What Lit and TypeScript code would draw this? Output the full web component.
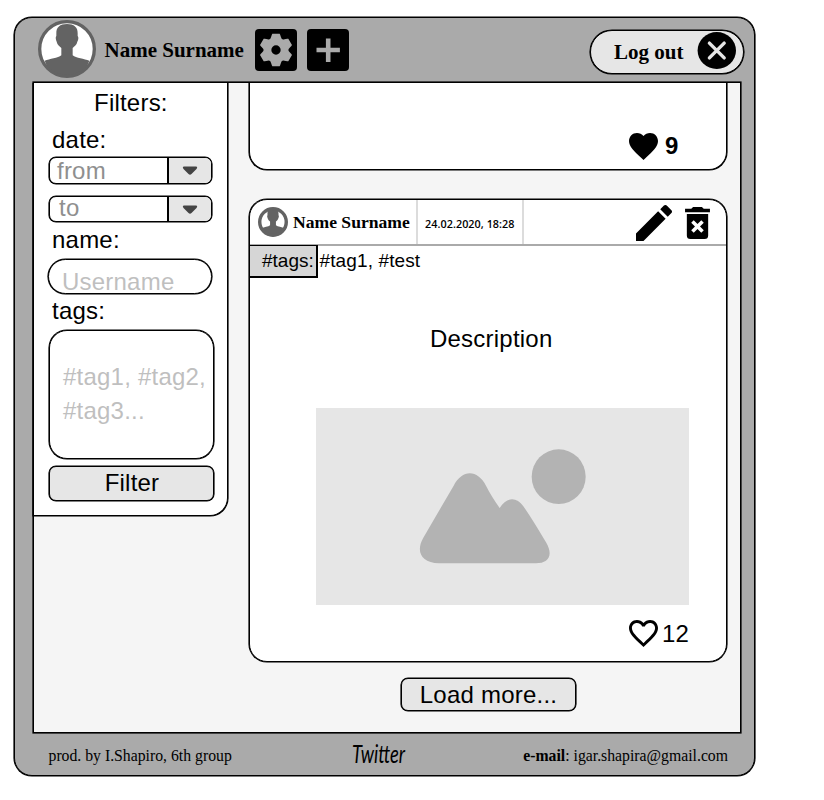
import { LitElement, html, css, svg } from "lit";
import { customElement } from "lit/decorators.js";

const gearTooth = (deg: number, pts: [number, number][]) => {
  const a = (deg * Math.PI) / 180;
  return pts.map(([x, y]) =>
    `${(x * Math.cos(a) - y * Math.sin(a)).toFixed(2)} ${(x * Math.sin(a) + y * Math.cos(a)).toFixed(2)}`);
};

const gearPath = (() => {
  let d = "";
  for (let i = 0; i < 6; i++) {
    const [a, b, c, e, f, g] = gearTooth(i * 60, [[-15, -38], [-12.5, -46], [-11, -49], [11, -49], [12.5, -46], [15, -38]]);
    const [valley] = gearTooth(i * 60 + 30, [[0, -34]]);
    d += `${i ? "L" : "M"}${a}L${b}L${c}L${e}L${f}L${g}Q${valley} ${gearTooth(i * 60 + 60, [[-15, -38]])[0]}`;
  }
  return d + "ZM14 0A14 14 0 1 0 -14 0A14 14 0 1 0 14 0Z";
})();

const avatar = (ring: number) => html`<svg class="avatar" viewBox="0 0 174 174">
  <circle cx="87" cy="87" r="80" fill="#fff"></circle>
  <path fill="#636363" d="M87 12C66 12 54 22 55 40L55 48C52 50 53 59 56 65C58 75 65 79 70 84V106C60 114 35 117 20 122C30 155 58 171 87 171C116 171 144 155 154 122C139 117 114 114 104 106V84C109 79 116 75 118 65C122 59 122 50 119 48L119 40C120 22 108 12 87 12Z"></path>
  <circle cx="87" cy="87" r=${87 - ring / 2} fill="none" stroke="#636363" stroke-width=${ring}></circle>
</svg>`;

const heartSolid = svg`<path d="M12 21.35L10.55 20.03C5.4 15.36 2 12.27 2 8.5C2 5.41 4.42 3 7.5 3C9.24 3 10.91 3.81 12 5.08C13.09 3.81 14.76 3 16.5 3C19.58 3 22 5.41 22 8.5C22 12.27 18.6 15.36 13.45 20.03L12 21.35Z"></path>`;
const heartOutline = svg`<path d="M12.1 18.55L12 18.65L11.89 18.55C7.14 14.24 4 11.39 4 8.5C4 6.5 5.5 5 7.5 5C9.04 5 10.54 6 11.07 7.36H12.93C13.46 6 14.96 5 16.5 5C18.5 5 20 6.5 20 8.5C20 11.39 16.86 14.24 12.1 18.55M16.5 3C14.76 3 13.09 3.81 12 5.08C10.91 3.81 9.24 3 7.5 3C4.42 3 2 5.41 2 8.5C2 12.27 5.4 15.36 10.55 20.03L12 21.35L13.45 20.03C18.6 15.36 22 12.27 22 8.5C22 5.41 19.58 3 16.5 3Z"></path>`;

@customElement("app-root")
export class AppRoot extends LitElement {
  static styles = css`
    :host {
      display: block;
      width: 824px;
      height: 800px;
      box-sizing: border-box;
      padding: 17px 0 0 14px;
      background: #fff;
      color: #000;
      font: 24px/28px "Liberation Sans", Arial, sans-serif;
      letter-spacing: 0.22px;
    }
    * { box-sizing: border-box; }
    svg { display: block; flex: none; }
    button { font: inherit; letter-spacing: inherit; color: inherit; padding: 0; display: block; }
    .line { border: 1px solid #000; box-shadow: 0 0 0 0.6px #000; }
    .frame { width: 741px; height: 759px; border-radius: 18px; background: #aaa; }
    .serif { font-family: "Liberation Serif", "Times New Roman", serif; font-weight: bold; letter-spacing: 0; }

    .bar { height: 64px; display: flex; align-items: flex-start; padding: 2px 10px 0 23px; }
    .bar .avatar { width: 58px; height: 58px; }
    .bar .who { font-size: 21px; margin: 16px 11px 0 8.5px; width: 139px; white-space: nowrap; }
    .tile { width: 42px; height: 42px; border-radius: 4px; background: #000; border: 0; margin: 9px 10.5px 0 0; flex: none; }
    .logout { width: 154px; height: 44px; margin: 10px 0 0 auto; border-radius: 22px; background: #e6e6e6;
      display: flex; font-size: 21px; padding: 0 7px 0 23px; justify-content: space-between; align-items: flex-start; }
    .logout span { margin-top: 7px; }
    .logout svg { margin-top: 1px; }

    .screen { width: 708px; height: 651px; margin-left: 18px; background: #f5f5f5; display: flex; align-items: flex-start; }
    .filters { width: 195px; height: 433px; margin-left: -1px; background: #fff; border-top: 0; border-radius: 0 0 18px 0;
      padding: 6px 13px 0 15px; display: flex; flex-direction: column; clip-path: inset(0 -2px -2px -1px); }
    .filters h2 { font: inherit; margin: 0 0 9px; padding-left: 45px; }
    .filters label { padding-left: 3px; }
    .select { width: 163px; height: 27px; border-radius: 7px; display: flex; color: #8f8f8f; background: #fff; }
    .from-date { margin-top: 3px; }
    .to-date { margin: 12px 0 4px; height: 26px; }
    .select span { flex: 1; padding-left: 7px; line-height: 26px; }
    .to-date span { padding-left: 9px; line-height: 22px; }
    .arrow { width: 44px; border-left: 2px solid #000; border-radius: 0 6px 6px 0; background: #e6e6e6; padding: 8px 0 0 12.5px; }
    .field { color: #bfbfbf; background: #fff; }
    .user { width: 164px; height: 35px; margin: 5px 0 3px -1px; border-radius: 18px; padding: 8px 0 0 13px; }
    .tags { width: 165px; height: 129px; margin-top: 5px; border-radius: 18px; padding: 29px 0 0 13px; line-height: 34px; white-space: nowrap; }
    .action { background: #e6e6e6; border-radius: 7px; }
    .apply { width: 165px; height: 35px; margin-top: 7px; line-height: 31px; padding: 0 0 2px 1px; }

    .feed { width: 478px; margin-left: 21px; display: flex; flex-direction: column; }
    .post { background: #fff; }
    .previous { height: 87px; border-top: 0; border-radius: 0 0 18px 18px; padding: 49px 0 0 379px; clip-path: inset(0 -2px -2px -2px); }
    .likes { display: flex; height: 30px; align-items: flex-start; }
    .likes svg { width: 29px; height: 27px; margin-top: 1px; }
    .previous .likes { font-weight: bold; gap: 7px; }
    .current { height: 463px; margin-top: 29px; border-radius: 18px; }
    .meta { height: 46px; border-bottom: 2px solid #aaa; display: flex; align-items: flex-start; }
    .meta .avatar { width: 30px; height: 30px; margin: 7px 5px 0 8px; }
    .meta .who { font-size: 17.6px; width: 123px; margin-top: 8px; white-space: nowrap; }
    .meta time { width: 108px; height: 44px; border: solid #dcdcdc; border-width: 0 2px; padding-left: 7px;
      font: 600 10.8px/47px "Open Sans", sans-serif; letter-spacing: 0.05px; white-space: nowrap; }
    .pencil { margin: 5px 13px 0 auto; }
    .trash { margin: 7px 16px 0 0; }
    .tagrow { display: flex; font-size: 19px; height: 33px; margin-top: -1px; line-height: 31px; white-space: nowrap; letter-spacing: 0.12px; }
    .tagrow b { font-weight: normal; letter-spacing: 0; width: 68px; height: 33px; line-height: 29px; background: #d6d6d6; border: solid #000;
      border-width: 1px 2px 2px 0; padding-left: 12px; }
    .tagrow span { padding-left: 1.5px; }
    .text { margin: 47px 0 0; padding-left: 180px; }
    .picture { width: 373px; height: 197px; margin: 55px 0 0 66px; background: #e6e6e6; }
    .current .likes { margin: 14px 0 0 379px; gap: 4px; line-height: 29px; }
    .more { width: 175px; height: 33px; margin: 16px 0 0 152px; line-height: 31px; }

    .foot { height: 42px; display: flex; align-items: flex-start; padding: 9px 26px 0 33.5px; font: 15.75px/28px "Liberation Serif", serif; letter-spacing: 0; white-space: nowrap; }
    .foot .by { width: 303px; }
    .foot .brand { font: italic 24.5px/23px Lato, sans-serif; width: 160px; transform: scaleX(0.75); transform-origin: 0 0; margin-right: auto; }
  `;

  render() {
    const caret = html`<svg width="16" height="10" viewBox="0 0 16 10"><path fill="#444" d="M2 .5H14Q16 .8 14.5 3L9.5 8Q8 9.5 6.5 8L1.5 3Q0 .8 2 .5Z"></path></svg>`;
    return html`
      <div class="frame line">
        <header class="bar">
          ${avatar(10)}
          <span class="who serif">Name Surname</span>
          <button class="tile" aria-label="Settings">
            <svg width="42" height="42" viewBox="-63 -63 126 126"><path fill="#aaa" fill-rule="evenodd" d=${gearPath}></path></svg>
          </button>
          <button class="tile" aria-label="Add">
            <svg width="42" height="42"><path fill="#aaa" d="M18.9 9.5H23.5V18.7H32.9V23.3H23.5V33H18.9V23.3H9.5V18.7H18.9Z"></path></svg>
          </button>
          <button class="logout line serif"><span>Log out</span>
            <svg width="39" height="39" viewBox="0 0 39 39"><ellipse cx="19.8" cy="18.5" rx="19.2" ry="18.5"></ellipse><path stroke="#e6e6e6" stroke-width="3.4" stroke-linecap="round" d="M12.4 11.1L27.2 25.9M27.2 11.1L12.4 25.9"></path></svg>
          </button>
        </header>
        <main class="screen line">
          <aside class="filters line">
            <h2>Filters:</h2>
            <label>date:</label>
            <div class="select from-date line"><span>from</span><div class="arrow">${caret}</div></div>
            <div class="select to-date line"><span>to</span><div class="arrow">${caret}</div></div>
            <label>name:</label>
            <div class="field user line">Username</div>
            <label>tags:</label>
            <div class="field tags line">#tag1, #tag2,<br>#tag3...</div>
            <button class="action apply line">Filter</button>
          </aside>
          <section class="feed">
            <article class="post previous line">
              <div class="likes"><svg viewBox="2 3 20 18.35" preserveAspectRatio="none">${heartSolid}</svg>9</div>
            </article>
            <article class="post current line">
              <div class="meta">
                ${avatar(20)}
                <span class="who serif">Name Surname</span>
                <time>24.02.2020, 18:28</time>
                <svg class="pencil" width="36" height="36" viewBox="3 3 18 18"><path d="M20.71 7.04C21.1 6.65 21.1 6 20.71 5.63L18.37 3.29C18 2.9 17.35 2.9 16.96 3.29L15.12 5.12L18.87 8.87M3 17.25V21H6.75L17.81 9.93L14.06 6.18L3 17.25Z"></path></svg>
                <svg class="trash" width="25" height="32" viewBox="5 3 14 18"><path d="M6 19A2 2 0 0 0 8 21H16A2 2 0 0 0 18 19V7H6V19M8.46 11.88L9.87 10.47L12 12.59L14.12 10.47L15.53 11.88L13.41 14L15.53 16.12L14.12 17.53L12 15.41L9.88 17.53L8.47 16.12L10.59 14L8.46 11.88M15.5 4L14.5 3H9.5L8.5 4H5V6H19V4H15.5Z"></path></svg>
              </div>
              <div class="tagrow"><b>#tags:</b><span>#tag1, #test</span></div>
              <p class="text">Description</p>
              <div class="picture">
                <svg width="373" height="197" viewBox="48 294 1119 591"><g fill="#b3b3b3"><ellipse cx="776" cy="500" rx="81" ry="82"></ellipse>
                <path d="M461 527C486 477 533 477 558 527Q573 557 599 594C620 560 650 560 670 589Q690 616 738 697C762 738 744 760 708 760H417C362 758 347 723 370 683Z"></path></g></svg>
              </div>
              <div class="likes"><svg viewBox="2 3 20 18.35" preserveAspectRatio="none">${heartOutline}</svg>12</div>
            </article>
            <button class="action more line">Load more...</button>
          </section>
        </main>
        <footer class="foot">
          <span class="by">prod. by I.Shapiro, 6th group</span>
          <span class="brand">Twitter</span>
          <span><b>e-mail</b>: igar.shapira@gmail.com</span>
        </footer>
      </div>`;
  }
}
